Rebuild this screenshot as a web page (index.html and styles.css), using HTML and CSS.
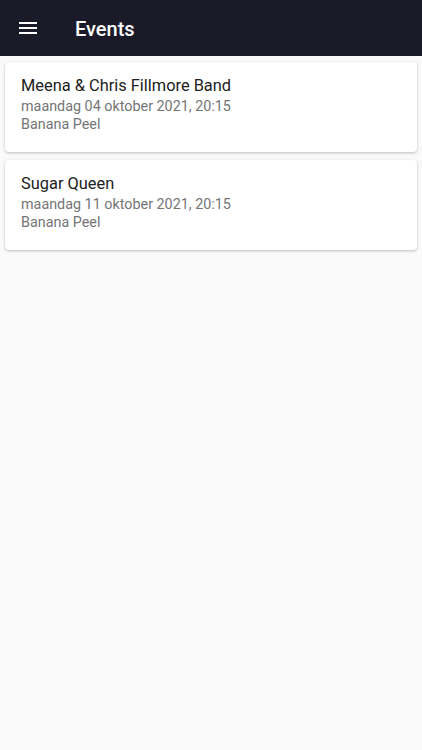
FILE: index.html
```html
<!DOCTYPE html>
<html lang="en">
<head>
    <meta charset="UTF-8">
    <meta name="viewport" content="width=device-width, initial-scale=1.0">
    <title>Events</title>
    <link rel="stylesheet" href="styles.css">
</head>
<body>
    <header class="toolbar">
        <button class="menu-button" aria-label="Menu">
            <svg width="24" height="24" viewBox="0 0 24 24"><path fill="#fff" d="M3 18h18v-2H3v2zm0-5h18v-2H3v2zm0-7v2h18V6H3z"/></svg>
        </button>
        <h1 class="toolbar-title">Events</h1>
    </header>
    <main class="event-list">
        <div class="event-card">
            <div class="event-name">Meena &amp; Chris Fillmore Band</div>
            <div class="event-date">maandag 04 oktober 2021, 20:15</div>
            <div class="event-venue">Banana Peel</div>
        </div>
        <div class="event-card">
            <div class="event-name">Sugar Queen</div>
            <div class="event-date">maandag 11 oktober 2021, 20:15</div>
            <div class="event-venue">Banana Peel</div>
        </div>
    </main>
</body>
</html>
```

FILE: styles.css
```css
body {
    margin: 0;
    background-color: #fafafa;
    font-family: Roboto, "Liberation Sans", sans-serif;
}
.toolbar {
    height: 56px;
    background-color: #1b1a29;
    display: flex;
    align-items: center;
    padding-left: 16px;
}
.menu-button {
    width: 24px;
    height: 24px;
    padding: 0;
    border: none;
    background: none;
    display: flex;
}
.toolbar-title {
    margin: 2px 0 0 35px;
    color: #fff;
    font-size: 20px;
    font-weight: 500;
}
.event-list {
    padding: 6px 5px;
    display: flex;
    flex-direction: column;
    gap: 8px;
}
.event-card {
    background: #fff;
    border-radius: 4px;
    box-shadow: 0 1px 3px rgba(0, 0, 0, 0.25);
    padding: 12px 16px 18px;
}
.event-name {
    color: #212121;
    font-size: 16.4px;
    line-height: 24px;
}
.event-date, .event-venue {
    color: #757575;
    font-size: 14.35px;
    line-height: 18px;
}
```
